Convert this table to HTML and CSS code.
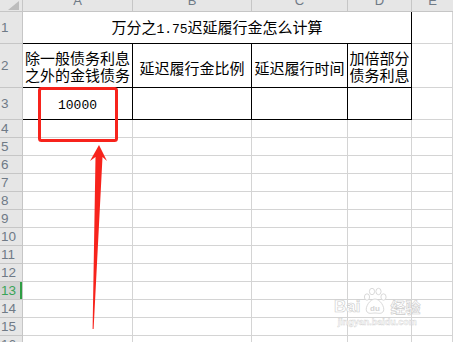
FILE: index.html
```html
<!DOCTYPE html>
<html lang="zh">
<head>
<meta charset="utf-8">
<link rel="stylesheet" href="styles.css">
</head>
<body>
<div class="page">
  <div class="sheet">
    <div class="corner"><span class="tri"></span></div>
    <div class="colh"><span>A</span></div>
    <div class="colh"><span>B</span></div>
    <div class="colh"><span>C</span></div>
    <div class="colh"><span>D</span></div>
    <div class="colh last"><span>E</span></div>

    <div class="rowh">1</div>
    <div class="cell title span4 bd"><span>万分之<span class="mono">1.75</span>迟延履行金怎么计算</span></div>
    <div class="cell"></div>

    <div class="rowh">2</div>
    <div class="cell hdr bd"><span>除一般债务利息<br>之外的金钱债务</span></div>
    <div class="cell hdr single bd"><span>延迟履行金比例</span></div>
    <div class="cell hdr single bd"><span>延迟履行时间</span></div>
    <div class="cell hdr bd"><span>加倍部分<br>债务利息</span></div>
    <div class="cell"></div>

    <div class="rowh">3</div>
    <div class="cell num bd"><span>10000</span></div>
    <div class="cell bd"></div>
    <div class="cell bd"></div>
    <div class="cell bd"></div>
    <div class="cell"></div>

    <div class="rowh">4</div><div class="cell"></div><div class="cell"></div><div class="cell"></div><div class="cell"></div><div class="cell"></div>
    <div class="rowh">5</div><div class="cell"></div><div class="cell"></div><div class="cell"></div><div class="cell"></div><div class="cell"></div>
    <div class="rowh">6</div><div class="cell"></div><div class="cell"></div><div class="cell"></div><div class="cell"></div><div class="cell"></div>
    <div class="rowh">7</div><div class="cell"></div><div class="cell"></div><div class="cell"></div><div class="cell"></div><div class="cell"></div>
    <div class="rowh">8</div><div class="cell"></div><div class="cell"></div><div class="cell"></div><div class="cell"></div><div class="cell"></div>
    <div class="rowh">9</div><div class="cell"></div><div class="cell"></div><div class="cell"></div><div class="cell"></div><div class="cell"></div>
    <div class="rowh">10</div><div class="cell"></div><div class="cell"></div><div class="cell"></div><div class="cell"></div><div class="cell"></div>
    <div class="rowh">11</div><div class="cell"></div><div class="cell"></div><div class="cell"></div><div class="cell"></div><div class="cell"></div>
    <div class="rowh">12</div><div class="cell"></div><div class="cell"></div><div class="cell"></div><div class="cell"></div><div class="cell"></div>
    <div class="rowh active">13</div><div class="cell"></div><div class="cell"></div><div class="cell"></div><div class="cell"></div><div class="cell"></div>
    <div class="rowh">14</div><div class="cell"></div><div class="cell"></div><div class="cell"></div><div class="cell"></div><div class="cell"></div>
    <div class="rowh">15</div><div class="cell"></div><div class="cell"></div><div class="cell"></div><div class="cell"></div><div class="cell"></div>
    <div class="rowh">16</div><div class="cell"></div><div class="cell"></div><div class="cell"></div><div class="cell"></div><div class="cell"></div>
  </div>

  <svg class="annot" width="453" height="342" viewBox="0 0 453 342">
    <rect x="39.5" y="88.5" width="77" height="52" rx="2" fill="none" stroke="#f7231c" stroke-width="3"/>
    <polygon points="99,145 107,161 102.5,157 93.6,329 92.6,329 95.5,157 90,161" fill="#f7231c"/>
  </svg>

  <div class="watermark">
    <div class="wm-top">
      <span class="wm-bai">Bai</span>
      <svg class="wm-paw" width="26" height="28" viewBox="0 0 26 28">
        <g fill="#fff" stroke="#cfcfcf" stroke-width="0.8">
          <ellipse cx="5" cy="10" rx="2.6" ry="3.2"/>
          <ellipse cx="10" cy="4.5" rx="2.6" ry="3.2"/>
          <ellipse cx="16.5" cy="4.5" rx="2.6" ry="3.2"/>
          <ellipse cx="21.5" cy="10" rx="2.6" ry="3.2"/>
          <path d="M13 12 C8 12 3 20 4.5 24 C6 27.5 10 26 13 26 C16 26 20 27.5 21.5 24 C23 20 18 12 13 12 Z"/>
        </g>
        <text x="13" y="23.5" text-anchor="middle" class="wm-du">du</text>
      </svg>
      <span class="wm-jy">经验</span>
    </div>
    <div class="wm-url">jingyan.baidu.com</div>
  </div>
</div>
</body>
</html>
```

FILE: styles.css
```css
html, body {
  margin: 0;
  padding: 0;
  background: #ffffff;
}

.page {
  position: relative;
  width: 453px;
  height: 342px;
  overflow: hidden;
}

.sheet {
  display: grid;
  grid-template-columns: 23px 110px 119px 96px 64px 41px;
  grid-template-rows: 12px 32px 44px 32px repeat(13, 18px);
  width: 453px;
  font-family: "Noto Sans CJK SC", "Noto Sans", sans-serif;
  color: #000;
}

.corner {
  background: #e6e6e6;
  border-right: 1px solid #c6c6c6;
  border-bottom: 1px solid #c6c6c6;
  position: relative;
  overflow: hidden;
}

.tri {
  position: absolute;
  right: 3px;
  bottom: 1px;
  width: 0;
  height: 0;
  border-left: 11px solid transparent;
  border-bottom: 9px solid #bdbdbd;
}

.colh {
  background: #e6e6e6;
  border-right: 1px solid #c6c6c6;
  border-bottom: 1px solid #c6c6c6;
  overflow: hidden;
  display: flex;
  justify-content: center;
  align-items: flex-start;
  font-family: "Liberation Sans", Arial, sans-serif;
  font-size: 13px;
  color: #6f7a86;
}

.colh span {
  display: block;
  line-height: 13px;
  margin-top: -6px;
}

.colh.last {
  border-right: none;
}

.rowh {
  background: #e6e6e6;
  border-right: 1px solid #c6c6c6;
  border-bottom: 1px solid #c6c6c6;
  display: flex;
  align-items: center;
  justify-content: flex-start;
  padding-left: 1px;
  font-family: "Liberation Sans", Arial, sans-serif;
  font-size: 13.5px;
  color: #6f7a86;
  overflow: hidden;
}

.rowh.active {
  background: #d3d3d3;
  color: #3aa458;
  box-shadow: inset -2px 0 0 #2f9e44;
}

.cell {
  border-right: 1px solid #d4d4d4;
  border-bottom: 1px solid #d4d4d4;
  display: flex;
  align-items: center;
  justify-content: center;
  text-align: center;
  font-size: 15px;
  line-height: 17px;
  overflow: hidden;
}

.cell.bd {
  border-right-color: #000;
  border-bottom-color: #000;
}

.span4 {
  grid-column: span 4;
}

.title {
  padding-top: 1px;
}

.hdr.single {
  padding-top: 4px;
}

.mono {
  font-family: "Liberation Mono", "DejaVu Sans Mono", monospace;
  font-size: 13px;
}

.num {
  font-family: "Liberation Mono", "DejaVu Sans Mono", monospace;
  font-size: 13px;
  padding-top: 3px;
}

.annot {
  position: absolute;
  left: 0;
  top: 0;
  pointer-events: none;
}

.watermark {
  position: absolute;
  left: 334px;
  top: 287px;
  display: flex;
  flex-direction: column;
  align-items: center;
  pointer-events: none;
}

.wm-top {
  display: flex;
  align-items: flex-end;
  gap: 2px;
}

.wm-bai,
.wm-jy {
  font-family: "Liberation Sans", Arial, sans-serif;
  font-weight: bold;
  font-size: 17px;
  line-height: 17px;
  color: #ffffff;
  -webkit-text-stroke: 0.6px #cbcbcb;
}

.wm-jy {
  font-family: "Noto Sans CJK SC", sans-serif;
  font-size: 15px;
  line-height: 17px;
}

.wm-du {
  font-family: "Liberation Sans", Arial, sans-serif;
  font-weight: bold;
  font-size: 8px;
  fill: #d4d4d4;
}

.wm-url {
  margin-top: 3px;
  font-family: "Liberation Sans", Arial, sans-serif;
  font-weight: bold;
  font-size: 9px;
  line-height: 9px;
  color: #ffffff;
  -webkit-text-stroke: 0.4px #d0d0d0;
}
```
